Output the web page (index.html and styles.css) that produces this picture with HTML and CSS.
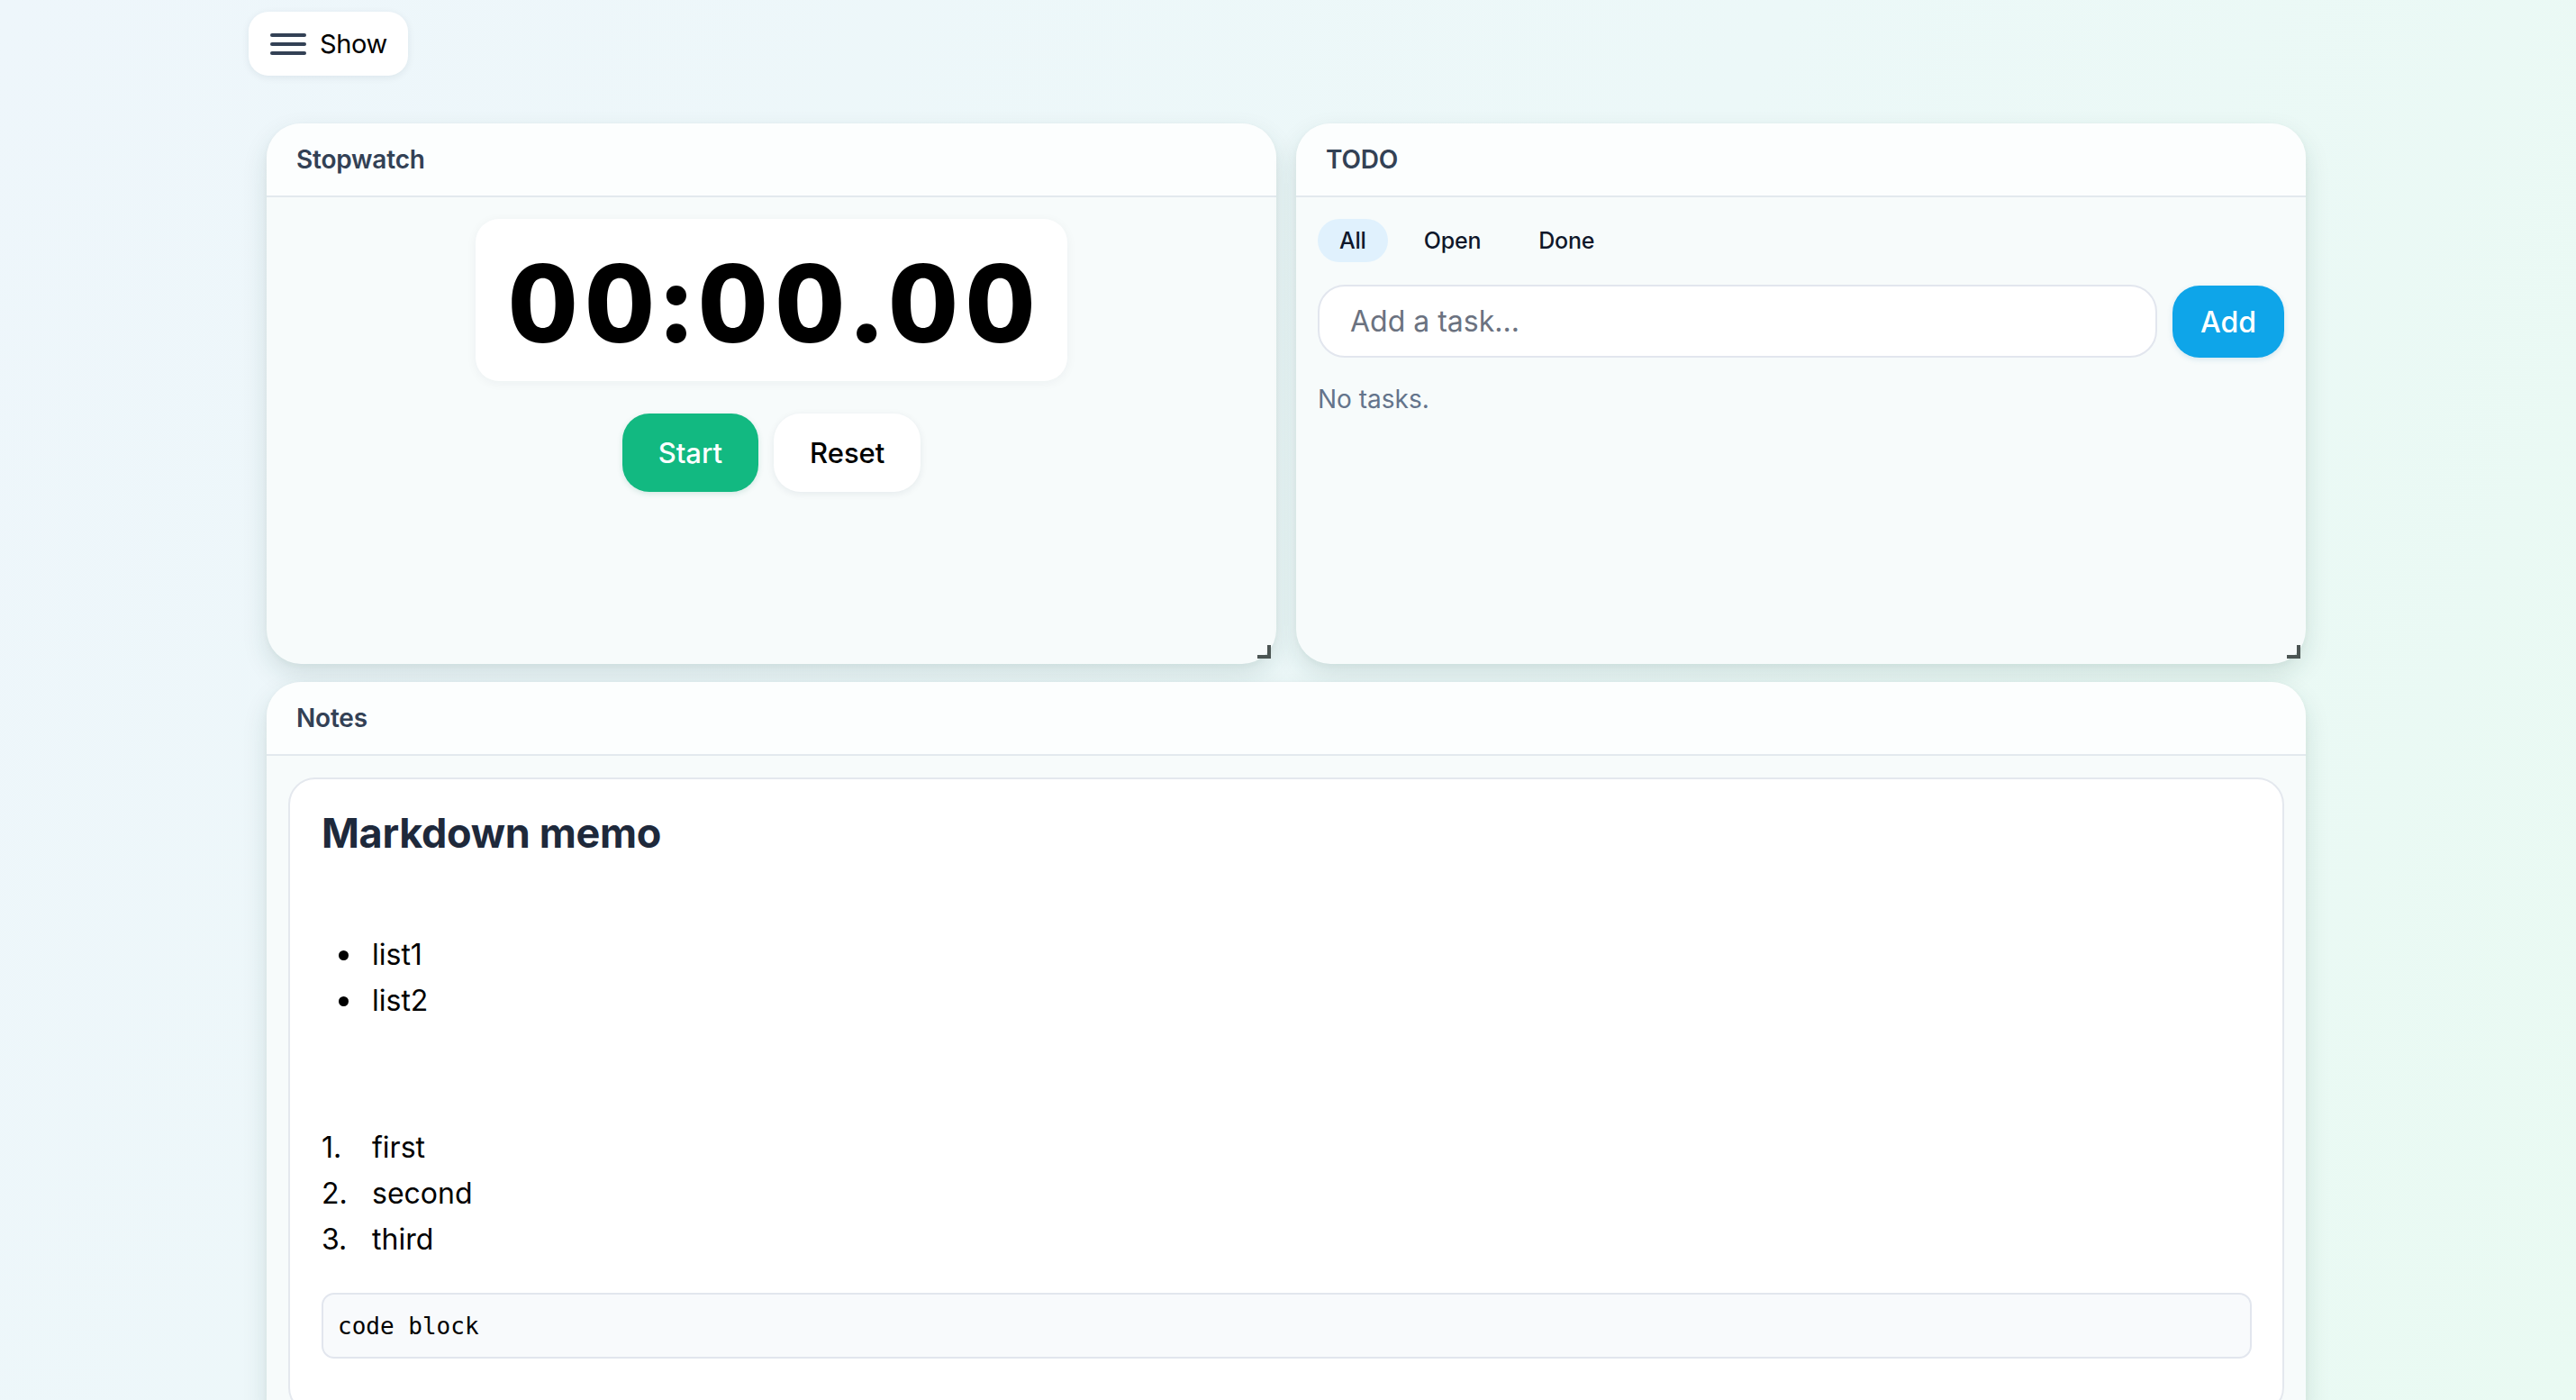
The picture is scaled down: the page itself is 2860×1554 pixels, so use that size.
FILE: index.html
```html
<!DOCTYPE html>
<html lang="en">
<head>
    <meta charset="UTF-8">
    <meta name="viewport" content="width=device-width, initial-scale=1.0">
    <title>Dashboard</title>
    <link rel="stylesheet" href="styles.css">
</head>
<body>

    <div class="page">
        <!-- Top bar with sidebar toggle -->
        <div class="topbar">
            <button class="menu-button">
                <svg class="menu-icon" width="40" height="24" viewBox="0 0 40 24">
                    <line x1="2" y1="2" x2="38" y2="2" />
                    <line x1="2" y1="12" x2="38" y2="12" />
                    <line x1="2" y1="22" x2="38" y2="22" />
                </svg>
                <span>Show</span>
            </button>
        </div>

        <div class="grid">
            <!-- Stopwatch -->
            <section class="card widget">
                <div class="card-header">Stopwatch</div>
                <div class="card-body stopwatch">
                    <div class="timer">00:00.00</div>
                    <div class="timer-actions">
                        <button class="btn btn-start">Start</button>
                        <button class="btn btn-reset">Reset</button>
                    </div>
                </div>
            </section>

            <!-- TODO -->
            <section class="card widget">
                <div class="card-header">TODO</div>
                <div class="card-body todo">
                    <div class="filters">
                        <button class="filter active">All</button>
                        <button class="filter">Open</button>
                        <button class="filter">Done</button>
                    </div>
                    <div class="add-row">
                        <input type="text" class="task-input" placeholder="Add a task...">
                        <button class="btn btn-add">Add</button>
                    </div>
                    <p class="empty">No tasks.</p>
                </div>
            </section>

            <!-- Notes -->
            <section class="card notes">
                <div class="card-header">Notes</div>
                <div class="card-body">
                    <div class="memo">
                        <h1>Markdown memo</h1>
                        <ul>
                            <li>list1</li>
                            <li>list2</li>
                        </ul>
                        <ol>
                            <li>first</li>
                            <li>second</li>
                            <li>third</li>
                        </ol>
                        <pre class="code">code block</pre>
                    </div>
                </div>
            </section>
        </div>
    </div>

</body>
</html>
```

FILE: styles.css
```css
* {
    box-sizing: border-box;
    margin: 0;
    padding: 0;
}

body {
    font-family: Inter, "Noto Sans", sans-serif;
    min-height: 100vh;
    background: linear-gradient(115deg, #eef6fb 0%, #ecf8f8 55%, #e9faf2 100%);
    color: #0f172a;
    overflow: hidden;
}

.page {
    width: 2308px;
    margin: 0 auto;
}

/* Top bar */
.topbar {
    padding-top: 13px;
    height: 137px;
}

.menu-button {
    display: flex;
    align-items: center;
    gap: 15px;
    height: 71px;
    padding: 0 23px 0 24px;
    border: none;
    border-radius: 22px;
    background-color: #ffffff;
    box-shadow: 0 2px 8px rgba(15, 40, 60, 0.08);
    font-family: inherit;
    font-size: 29px;
    letter-spacing: -0.4px;
    color: #000000;
    cursor: pointer;
}

.menu-icon line {
    stroke: #334155;
    stroke-width: 4;
    stroke-linecap: round;
}

/* Cards */
.grid {
    display: grid;
    grid-template-columns: 1fr 1fr;
    column-gap: 22px;
    row-gap: 20px;
    padding: 0 24px 0 20px;
}

.card {
    position: relative;
    background-color: #f7fbfb;
    border-radius: 38px;
    box-shadow: 0 12px 28px rgba(20, 70, 60, 0.13), 0 2px 6px rgba(20, 70, 60, 0.04);
}

.widget {
    height: 600px;
}

.notes {
    grid-column: 1 / -1;
}

/* resize grip in the corner */
.widget::after {
    content: "";
    position: absolute;
    right: 6px;
    bottom: 6px;
    width: 11px;
    height: 11px;
    border-right: 4px solid #4b5553;
    border-bottom: 4px solid #4b5553;
}

.card-header {
    padding: 20px 33px;
    line-height: 40px;
    font-size: 28px;
    font-weight: 600;
    letter-spacing: -0.2px;
    color: #334155;
    background-color: rgba(255, 255, 255, 0.65);
    border-bottom: 2px solid #e3e9ee;
    border-radius: 38px 38px 0 0;
}

.card-body {
    padding: 24px;
}

/* Stopwatch */
.stopwatch {
    display: flex;
    flex-direction: column;
    align-items: center;
}

.timer {
    padding: 34px 28px 26px 36px;
    font-size: 120px;
    line-height: 120px;
    font-weight: 800;
    letter-spacing: 8px;
    color: #000000;
    background-color: #ffffff;
    border-radius: 26px;
    box-shadow: 0 2px 12px rgba(15, 40, 60, 0.05);
    font-variant-numeric: tabular-nums;
}

.timer-actions {
    display: flex;
    gap: 17px;
    margin-top: 36px;
}

.btn {
    border: none;
    font-family: inherit;
    cursor: pointer;
}

.btn-start,
.btn-reset {
    height: 87px;
    padding: 0 40px;
    border-radius: 30px;
    font-size: 31px;
    font-weight: 500;
}

.btn-start {
    background-color: #12b981;
    color: #ffffff;
    box-shadow: 0 2px 6px rgba(16, 120, 90, 0.15);
}

.btn-reset {
    background-color: #ffffff;
    color: #000000;
    box-shadow: 0 2px 8px rgba(15, 40, 60, 0.08);
}

/* TODO */
.filters {
    display: flex;
    gap: 16px;
}

.filter {
    height: 48px;
    padding: 0 24px;
    border: none;
    border-radius: 24px;
    background: transparent;
    font-family: inherit;
    font-size: 25px;
    font-weight: 500;
    letter-spacing: -0.2px;
    color: #0f172a;
    cursor: pointer;
}

.filter.active {
    background-color: #e0f1fd;
}

.add-row {
    display: flex;
    gap: 17px;
    margin-top: 25px;
}

.task-input {
    flex: 1;
    height: 81px;
    padding: 0 34px;
    border: 2px solid #e2e6ee;
    border-radius: 30px;
    background-color: #ffffff;
    font-family: inherit;
    font-size: 32px;
    color: #0f172a;
    outline: none;
}

.task-input::placeholder {
    color: #6b7280;
}

.btn-add {
    height: 80px;
    margin-top: 1px;
    padding: 0 31px;
    border-radius: 30px;
    background-color: #0ea5e9;
    color: #ffffff;
    font-size: 32px;
    font-weight: 500;
    box-shadow: 0 2px 6px rgba(14, 110, 160, 0.15);
}

.empty {
    margin-top: 26px;
    font-size: 28px;
    line-height: 40px;
    color: #64748b;
}

/* Notes */
.memo {
    padding: 35px 34px 60px 35px;
    background-color: #ffffff;
    border: 2px solid #e4e8ee;
    border-radius: 30px;
    font-size: 32px;
    line-height: 51px;
    color: #000000;
}

.memo h1 {
    font-size: 45px;
    line-height: 50px;
    font-weight: 700;
    letter-spacing: -0.3px;
    color: #1e293b;
    margin-bottom: 84px;
}

.memo ul {
    list-style: none;
    padding-left: 56px;
    margin-bottom: 112px;
}

.memo ul li::before {
    content: "";
    display: inline-block;
    width: 11px;
    height: 11px;
    margin-left: -37px;
    margin-right: 26px;
    border-radius: 50%;
    background-color: #000000;
    vertical-align: 5px;
}

.memo ol {
    list-style: none;
    counter-reset: item;
    margin-bottom: 34px;
}

.memo ol li {
    counter-increment: item;
}

.memo ol li::before {
    content: counter(item) ".";
    display: inline-block;
    width: 56px;
}

.code {
    padding: 0 16px;
    height: 73px;
    line-height: 71px;
    background-color: #f8fafc;
    border: 2px solid #e2e6ee;
    border-radius: 14px;
    font-family: "DejaVu Sans Mono", "Liberation Mono", monospace;
    font-size: 26px;
    color: #000000;
}
```
